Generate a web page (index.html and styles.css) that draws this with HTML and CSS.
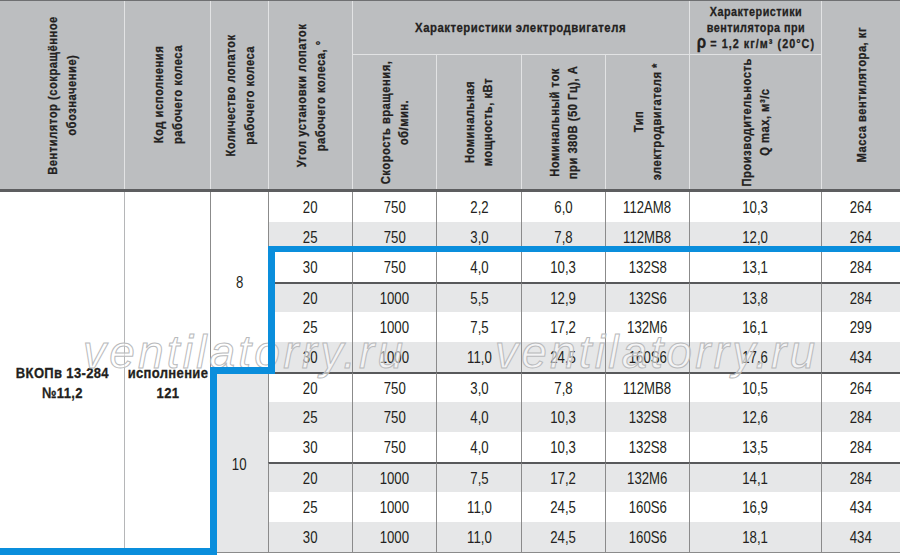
FILE: index.html
```html
<!DOCTYPE html>
<html lang="ru">
<head>
<meta charset="utf-8">
<title>ВКОПв 13-284 №11,2</title>
<link rel="stylesheet" href="styles.css">
</head>
<body>
<div class="page">
  <div class="thead">
    <div class="h vspan first"><div class="vt">Вентилятор (сокращённое<br>обозначение)</div></div>
    <div class="h vspan"><div class="vt">Код исполнения<br>рабочего колеса</div></div>
    <div class="h vspan"><div class="vt">Количество лопаток<br>рабочего колеса</div></div>
    <div class="h vspan"><div class="vt">Угол установки лопаток<br>рабочего колеса, °</div></div>
    <div class="h group motor"><span class="ht">Характеристики электродвигателя</span></div>
    <div class="h group fan"><span class="ht">Характеристики<br>вентилятора при<br><span class="rl"><span class="rho">ρ</span> = 1,2 кг/м³ (20°С)</span></span></div>
    <div class="h vspan"><div class="vt">Масса вентилятора, кг</div></div>
    <div class="h sub"><div class="vt">Скорость вращения,<br>об/мин.</div></div>
    <div class="h sub"><div class="vt">Номинальная<br>мощность, кВт</div></div>
    <div class="h sub"><div class="vt">Номинальный ток<br>при 380В (50 Гц), А</div></div>
    <div class="h sub"><div class="vt">Тип<br>электродвигателя *</div></div>
    <div class="h sub"><div class="vt">Производительность<br>Q max, м³/с</div></div>
  </div>

  <div class="tbody">
    <div class="c name first"><span>ВКОПв 13-284<br>№11,2</span></div>
    <div class="c name"><span>исполнение<br>121</span></div>
    <div class="c blades b8"><span>8</span></div>
    <div class="c"><span>20</span></div><div class="c"><span>750</span></div><div class="c"><span>2,2</span></div><div class="c"><span>6,0</span></div><div class="c"><span>112AM8</span></div><div class="c"><span>10,3</span></div><div class="c"><span>264</span></div>
    <div class="c g"><span>25</span></div><div class="c g"><span>750</span></div><div class="c g"><span>3,0</span></div><div class="c g"><span>7,8</span></div><div class="c g"><span>112MB8</span></div><div class="c g"><span>12,0</span></div><div class="c g"><span>264</span></div>
    <div class="c"><span>30</span></div><div class="c"><span>750</span></div><div class="c"><span>4,0</span></div><div class="c"><span>10,3</span></div><div class="c"><span>132S8</span></div><div class="c"><span>13,1</span></div><div class="c"><span>284</span></div>
    <div class="c g sep"><span>20</span></div><div class="c g sep"><span>1000</span></div><div class="c g sep"><span>5,5</span></div><div class="c g sep"><span>12,9</span></div><div class="c g sep"><span>132S6</span></div><div class="c g sep"><span>13,8</span></div><div class="c g sep"><span>284</span></div>
    <div class="c"><span>25</span></div><div class="c"><span>1000</span></div><div class="c"><span>7,5</span></div><div class="c"><span>17,2</span></div><div class="c"><span>132M6</span></div><div class="c"><span>16,1</span></div><div class="c"><span>299</span></div>
    <div class="c g"><span>30</span></div><div class="c g"><span>1000</span></div><div class="c g"><span>11,0</span></div><div class="c g"><span>24,5</span></div><div class="c g"><span>160S6</span></div><div class="c g"><span>17,6</span></div><div class="c g"><span>434</span></div>
    <div class="c blades b10 g sep"><span>10</span></div>
    <div class="c sep"><span>20</span></div><div class="c sep"><span>750</span></div><div class="c sep"><span>3,0</span></div><div class="c sep"><span>7,8</span></div><div class="c sep"><span>112MB8</span></div><div class="c sep"><span>10,5</span></div><div class="c sep"><span>264</span></div>
    <div class="c g"><span>25</span></div><div class="c g"><span>750</span></div><div class="c g"><span>4,0</span></div><div class="c g"><span>10,3</span></div><div class="c g"><span>132S8</span></div><div class="c g"><span>12,6</span></div><div class="c g"><span>284</span></div>
    <div class="c"><span>30</span></div><div class="c"><span>750</span></div><div class="c"><span>4,0</span></div><div class="c"><span>10,3</span></div><div class="c"><span>132S8</span></div><div class="c"><span>13,5</span></div><div class="c"><span>284</span></div>
    <div class="c g sep"><span>20</span></div><div class="c g sep"><span>1000</span></div><div class="c g sep"><span>7,5</span></div><div class="c g sep"><span>17,2</span></div><div class="c g sep"><span>132M6</span></div><div class="c g sep"><span>14,1</span></div><div class="c g sep"><span>284</span></div>
    <div class="c"><span>25</span></div><div class="c"><span>1000</span></div><div class="c"><span>11,0</span></div><div class="c"><span>24,5</span></div><div class="c"><span>160S6</span></div><div class="c"><span>16,9</span></div><div class="c"><span>434</span></div>
    <div class="c g"><span>30</span></div><div class="c g"><span>1000</span></div><div class="c g"><span>11,0</span></div><div class="c g"><span>24,5</span></div><div class="c g"><span>160S6</span></div><div class="c g"><span>18,1</span></div><div class="c g"><span>434</span></div>
  </div>

  <div class="wm wm1">ventilatorry.ru</div>
  <div class="wm wm2">ventilatorry.ru</div>

  <svg class="frame" width="900" height="555" viewBox="0 0 900 555">
    <g fill="#0a8edc">
      <rect x="268" y="246" width="632" height="6"/>
      <rect x="268" y="246" width="7" height="128"/>
      <rect x="210" y="367" width="65" height="7"/>
      <rect x="210" y="367" width="7" height="188"/>
      <rect x="0" y="548" width="217" height="7"/>
    </g>
  </svg>
</div>
</body>
</html>
```

FILE: styles.css
```css
* { box-sizing: border-box; }

html, body {
  margin: 0;
  padding: 0;
  background: #ffffff;
}

.page {
  position: relative;
  width: 900px;
  height: 555px;
  overflow: hidden;
  background: #ffffff;
  color: #231f20;
  font-family: "Liberation Sans", Arial, sans-serif;
}

.thead,
.tbody {
  display: grid;
  grid-template-columns: 124px 86px 58px 84px 84px 85px 84px 84px 132px 79px;
}

/* ---------- header ---------- */
.thead {
  grid-template-rows: 54px 134px;
  background: #bcbec0;
  border-top: 1px solid #6f7072;
  border-bottom: 3px solid #5d5e60;
}

.h {
  display: flex;
  align-items: center;
  justify-content: center;
  border-left: 1px solid #e2e3e4;
  font-weight: bold;
  font-size: 13.5px;
  letter-spacing: 0.6px;
  text-align: center;
  color: #231f20;
  -webkit-text-stroke: 0.3px #231f20;
}

.h.first { border-left: none; }

.vspan { grid-row: span 2; }

.vt {
  writing-mode: vertical-rl;
  transform: rotate(180deg) scale(1, 0.83);
  line-height: 19px;
  text-align: center;
  white-space: nowrap;
}

.sub .vt { line-height: 18px; }

.ht {
  display: inline-block;
  white-space: nowrap;
  transform: scale(0.84, 1);
}

.group { border-bottom: 1px solid #e2e3e4; }

.motor { grid-column: span 4; }

.fan {
  line-height: 16px;
  padding-top: 1px;
}

.fan .ht { transform: scale(0.8, 1); }

.rl { letter-spacing: 1.3px; }

.rho {
  font-size: 19px;
  line-height: 0;
  letter-spacing: 0;
}

/* ---------- body ---------- */
.tbody {
  grid-template-rows: repeat(12, 30px);
  border-bottom: 1px solid #8b8b8b;
}

.c {
  display: flex;
  align-items: center;
  justify-content: center;
  border-left: 1px solid #8b8b8b;
  font-size: 16.5px;
  text-align: center;
  color: #231f20;
}

.c > span {
  display: inline-block;
  white-space: nowrap;
  transform: scale(0.8, 1);
}

.c.first { border-left: none; }

.g { background: #e6e7e8; }

.sep { border-top: 2px solid #58595b; }

.name {
  grid-row: span 12;
  padding-top: 22px;
  font-weight: bold;
  font-size: 15.5px;
  line-height: 20px;
  letter-spacing: 0.4px;
  background: #ffffff;
  -webkit-text-stroke: 0.3px #231f20;
}

.c.name > span { transform: scale(0.84, 1); }

.name:not(.first) { border-left: 1px solid #b5b6b8; }

.blades { grid-row: span 6; }

.b8 { background: #ffffff; }

.b10 { padding-top: 2px; }

/* ---------- watermark ---------- */
.wm {
  position: absolute;
  top: 329px;
  font-family: "Liberation Sans", Arial, sans-serif;
  font-style: italic;
  font-size: 46px;
  line-height: 46px;
  letter-spacing: 3.2px;
  color: rgba(255, 255, 255, 0.55);
  -webkit-text-stroke: 1px #b9babc;
  white-space: nowrap;
  pointer-events: none;
}

.wm1 { left: 83px; }
.wm2 { left: 495px; }

/* ---------- blue outline ---------- */
.frame {
  position: absolute;
  left: 0;
  top: 0;
}
```
